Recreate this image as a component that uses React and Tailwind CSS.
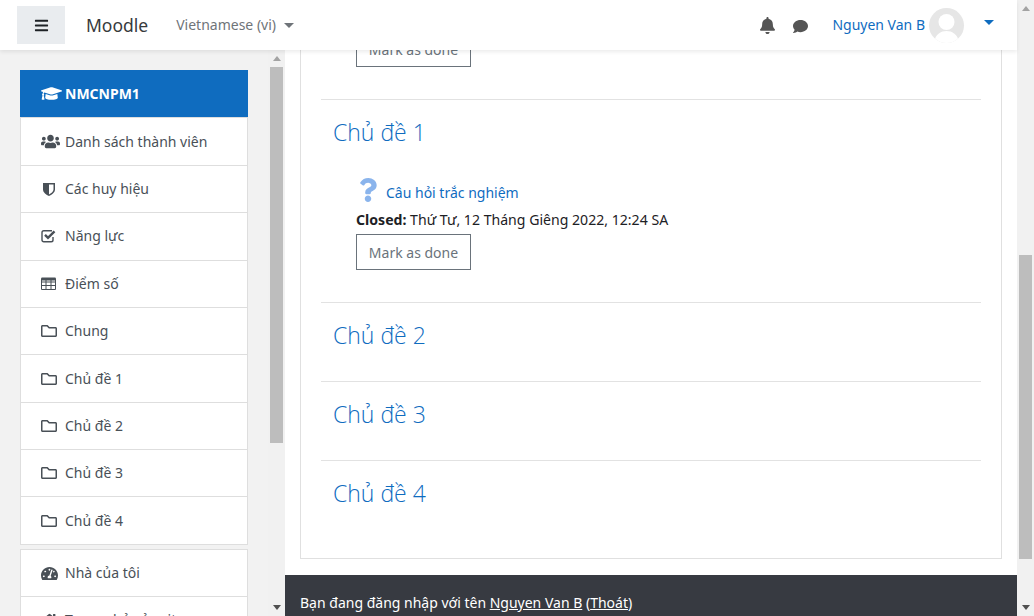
import { FaBars, FaBell, FaComment, FaGraduationCap, FaUsers, FaRegFolder, FaTachometerAlt, FaHome, FaQuestion } from 'react-icons/fa';

const ShieldIcon = () => (
    <svg viewBox="0 0 12 14" className="ml-[2px] h-[14px] w-[12px]" fill="#495057">
        <path d="M0 1h12v6.500c0 3-3.400 5.400-6 6.500-2.600-1.100-6-3.500-6-6.500zM6 2.500v10c1.900-1 4.500-2.900 4.500-5v-5z" />
    </svg>
);

const CheckIcon = () => (
    <svg viewBox="0 0 16 14" className="h-[14px] w-[16px]" fill="none" stroke="#495057">
        <path d="M12 8v3c0 1.100-.7 1.800-1.800 1.800H2.800C1.700 12.800 1 12 1 11V3.500c0-1.100.7-1.800 1.800-1.800H11" strokeWidth="1.400" />
        <path d="M4 5.800l3 3 6.500-6.500" strokeWidth="2.400" />
    </svg>
);

const TableIcon = () => (
    <svg viewBox="0 0 15 13" className="h-[13px] w-[15px]" fill="none" stroke="#495057">
        <path d="M.5 1.500h14v11H.5zM.5 5h14M.5 8.500h14M5 3v9M10 3v9" />
        <path d="M.5 2h14" strokeWidth="3" />
    </svg>
);

const courseNav = [
    { label: 'Danh sách thành viên', icon: <FaUsers className="text-[19px]" /> },
    { label: 'Các huy hiệu', icon: <ShieldIcon /> },
    { label: 'Năng lực', icon: <CheckIcon /> },
    { label: 'Điểm số', icon: <TableIcon /> },
    { label: 'Chung', icon: <FaRegFolder className="text-[16px]" /> },
    { label: 'Chủ đề 1', icon: <FaRegFolder className="text-[16px]" /> },
    { label: 'Chủ đề 2', icon: <FaRegFolder className="text-[16px]" /> },
    { label: 'Chủ đề 3', icon: <FaRegFolder className="text-[16px]" /> },
    { label: 'Chủ đề 4', icon: <FaRegFolder className="text-[16px]" /> },
];

const NavRow = ({ label, icon }) => (
    <div className="flex h-[47.375px] items-center border-t border-[#dedede] bg-white pl-[20px] text-[#495057]">
        <span className="flex w-[24px] shrink-0 items-center text-[#495057]">{icon}</span>
        <span>{label}</span>
    </div>
);

const Arrow = ({ down }) => (
    <div className={`h-0 w-0 border-x-[4px] border-x-transparent ${down ? 'border-t-[5px] border-t-[#505050]' : 'border-b-[5px] border-b-[#a3a3a3]'}`} />
);

const Heading = ({ title }) => (
    <h3 className="-ml-px text-[23px] font-light leading-[32px] text-[#0f6cbf]" style={{ fontFamily: '"Open Sans", sans-serif' }}>{title}</h3>
);

const SectionTitle = ({ title, last }) => (
    <div className={`h-[79px] pl-[13px] pt-[16px] ${last ? '' : 'border-b border-[#e2e2e2]'}`}>
        <Heading title={title} />
    </div>
);

const DoneButton = ({ className }) => (
    <button className={`h-[36px] w-[115px] border border-[#6a737b] pt-px text-[#6a737b] ${className}`}>Mark as done</button>
);

export default function App() {
    return (
        <div className="flex h-screen overflow-hidden bg-white text-[14px] leading-[22px] text-[#1d2125]" style={{ fontFamily: '"Noto Sans", sans-serif' }}>
            <div className="flex min-w-0 flex-1 flex-col">
                {/* Navbar */}
                <header className="relative z-10 flex h-[50px] shrink-0 items-center bg-white pl-[17px] pr-[23px] shadow-[0_2px_4px_rgba(0,0,0,0.08)]">
                    <button className="flex h-[38px] w-[48px] items-center justify-center bg-[#e9ecef] text-[#1d2125]"><FaBars className="text-[15px]" /></button>
                    <span className="ml-[21px] text-[17.500px] text-[#373a3c]">Moodle</span>
                    <span className="ml-[28px] text-[#6f7479]">Vietnamese ‎(vi)‎</span>
                    <span className="ml-[8px] h-0 w-0 border-x-[5px] border-t-[5px] border-x-transparent border-t-[#6f7479]" />
                    <div className="ml-auto flex items-center">
                        <FaBell className="text-[17px] text-[#555]" />
                        <FaComment className="ml-[17px] mt-[2px] text-[15px] text-[#555]" />
                        <span className="ml-[24px] text-[#0f6cbf]">Nguyen Van B</span>
                        <span className="ml-[4px] flex h-[35px] w-[35px] overflow-hidden rounded-full bg-[#e6e6e6]">
                            <svg viewBox="0 0 35 35" className="h-[35px] w-[35px]"><circle cx="17.500" cy="14" r="8" fill="#fff" /><path d="M5 35c1-9 7-12 12.500-12S29 26 30 35z" fill="#fff" /></svg>
                        </span>
                        <span className="mb-[6px] ml-[20px] h-0 w-0 border-x-[5px] border-t-[5px] border-x-transparent border-t-[#0f6cbf]" />
                    </div>
                </header>

                <div className="flex min-h-0 flex-1">
                    {/* Sidebar */}
                    <aside className="flex w-[285px] shrink-0 bg-[#f2f2f2]">
                        <nav className="w-[268px] overflow-hidden pl-[20px] pr-[20px] pt-[20px]">
                            <div className="flex h-[47.450px] items-center bg-[#0f6cbf] pl-[21px] font-bold text-white">
                                <FaGraduationCap className="mr-[3px] text-[21px]" />
                                <span>NMCNPM1</span>
                            </div>
                            <div className="border-x border-b border-[#dedede]">
                                {courseNav.map(item => <NavRow key={item.label} {...item} />)}
                            </div>
                            <div className="mt-[4px] border-x border-[#dedede]">
                                <NavRow label="Nhà của tôi" icon={<FaTachometerAlt className="text-[17px]" />} />
                                <NavRow label="Trang chủ của site" icon={<FaHome className="text-[17px]" />} />
                            </div>
                        </nav>
                        <div className="flex w-[17px] flex-col items-center bg-[#f1f1f1]">
                            <div className="flex h-[17px] items-center justify-center"><Arrow /></div>
                            <div className="h-[376px] w-[13px] bg-[#bdbdbd]" />
                            <div className="mt-auto flex h-[17px] items-center justify-center"><Arrow down /></div>
                        </div>
                    </aside>

                    {/* Main */}
                    <main className="flex min-w-0 flex-1 flex-col overflow-hidden">
                        <div className="mx-[15px] -mt-[19px] h-[528px] shrink-0 border-x border-b border-[#e0e0e0] px-[20px]">
                            <div className="h-[69px] border-b border-[#e2e2e2] pl-[35px]">
                                <DoneButton />
                            </div>
                            <div className="h-[203px] border-b border-[#e2e2e2] pl-[13px] pt-[16px]">
                                <Heading title="Chủ đề 1" />
                                <div className="ml-[22px] mt-[30px] flex items-start">
                                    <FaQuestion className="text-[24px] text-[#8ab4ec]" />
                                    <span className="ml-[6px] mt-[4px] text-[#0f6cbf]">Câu hỏi trắc nghiệm</span>
                                </div>
                                <p className="ml-[22px] mt-[5px] text-[14.100px]"><b>Closed:</b> Thứ Tư, 12 Tháng Giêng 2022, 12:24 SA</p>
                                <DoneButton className="ml-[22px] mt-[3px]" />
                            </div>
                            <SectionTitle title="Chủ đề 2" />
                            <SectionTitle title="Chủ đề 3" />
                            <SectionTitle title="Chủ đề 4" last />
                        </div>
                        <footer className="mt-[16px] flex-1 bg-[#373a41] pl-[15px] pt-[17px] text-white">
                            Bạn đang đăng nhập với tên <a className="underline">Nguyen Van B</a> (<a className="underline">Thoát</a>)
                        </footer>
                    </main>
                </div>
            </div>

            {/* Page scrollbar */}
            <div className="flex w-[17px] shrink-0 flex-col items-center bg-[#f1f1f1]">
                <div className="flex h-[17px] items-center justify-center"><Arrow /></div>
                <div className="mt-[238px] h-[304px] w-[13px] bg-[#bdbdbd]" />
                <div className="mt-auto flex h-[17px] items-center justify-center"><Arrow down /></div>
            </div>
        </div>
    );
}
